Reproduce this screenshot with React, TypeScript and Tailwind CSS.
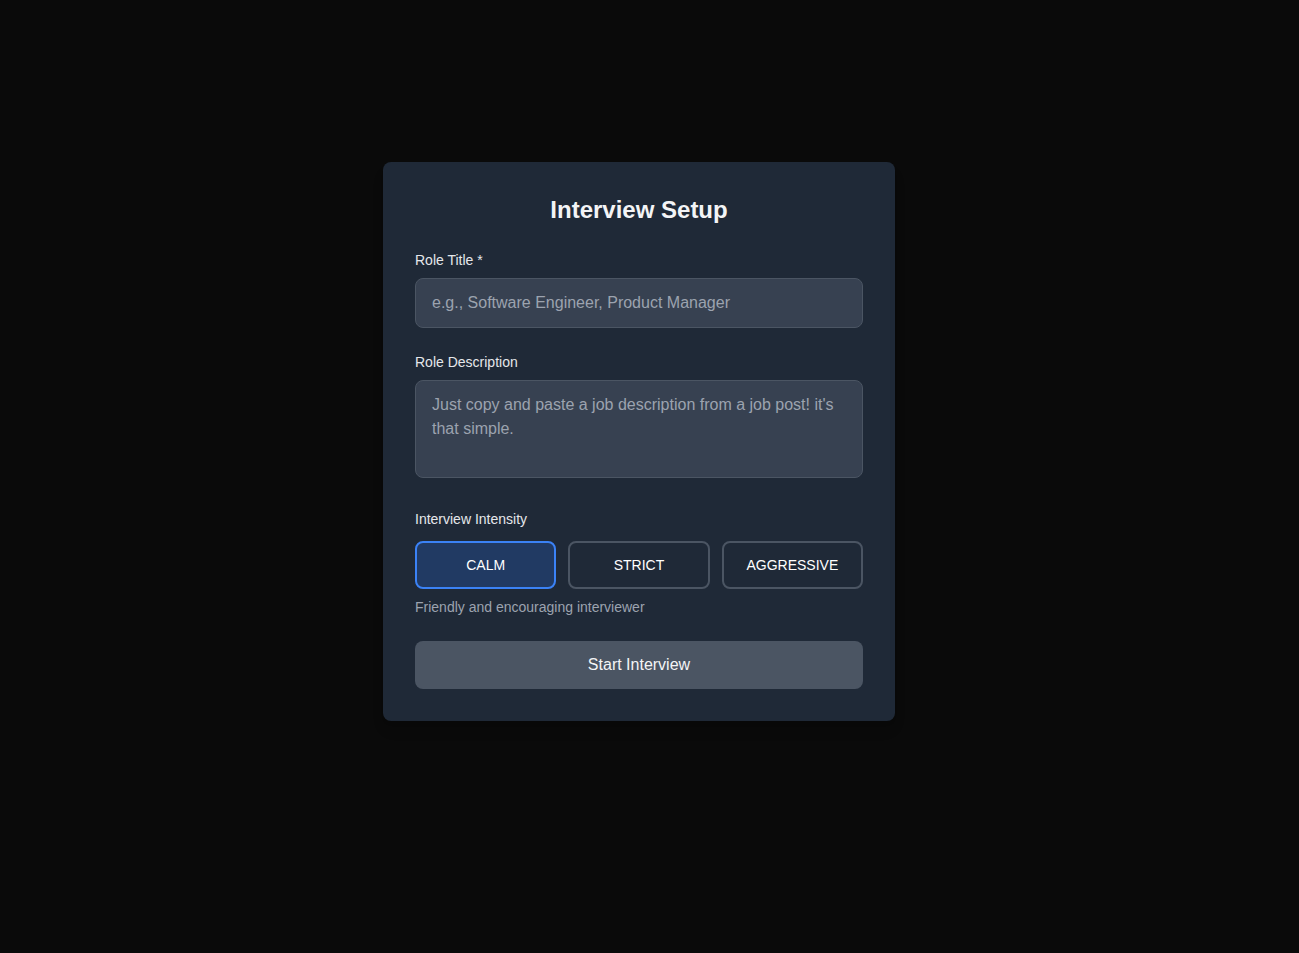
import { useState } from "react";

const intensities = [
  { key: "CALM", desc: "Friendly and encouraging interviewer" },
  { key: "STRICT", desc: "Professional and demanding interviewer" },
  { key: "AGGRESSIVE", desc: "Tough, high-pressure interviewer" },
];

export default function App() {
  const [intensity, setIntensity] = useState("CALM");
  const current = intensities.find((i) => i.key === intensity);

  return (
    <div
      className="min-h-screen bg-[#0a0a0a] flex items-center justify-center pr-[21px] pb-[70px]"
      style={{ fontFamily: '"Liberation Sans", Arial, sans-serif' }}
    >
      <div className="w-[512px] bg-[#1f2937] rounded-lg p-8 shadow-lg">
        <h1 className="text-2xl font-bold text-center text-[#f3f4f6] mb-6">
          Interview Setup
        </h1>

        {/* Role title */}
        <label className="block text-sm text-[#e5e7eb] mb-2">Role Title *</label>
        <input
          type="text"
          placeholder="e.g., Software Engineer, Product Manager"
          className="block w-full px-4 py-3 text-base bg-[#374151] border border-[#4b5563] rounded-lg text-white placeholder:text-[#9ca3af] outline-none"
        />

        {/* Role description */}
        <label className="block text-sm text-[#e5e7eb] mt-6 mb-2">
          Role Description
        </label>
        <textarea
          rows={3}
          placeholder="Just copy and paste a job description from a job post! it's that simple."
          className="block w-full px-4 py-3 text-base leading-6 bg-[#374151] border border-[#4b5563] rounded-lg text-white placeholder:text-[#9ca3af] outline-none resize-none"
        />

        {/* Intensity */}
        <label className="block text-sm text-[#e5e7eb] mt-[31px] mb-3">
          Interview Intensity
        </label>
        <div className="grid grid-cols-3 gap-3">
          {intensities.map((it) => (
            <button
              key={it.key}
              onClick={() => setIntensity(it.key)}
              className={
                it.key === intensity
                  ? "py-3 text-sm rounded-lg border-2 border-[#3b82f6] bg-[#213a63] text-white"
                  : "py-3 text-sm rounded-lg border-2 border-[#4b5563] bg-transparent text-white"
              }
            >
              {it.key}
            </button>
          ))}
        </div>
        <p className="text-sm text-[#9ca3af] mt-2">{current?.desc}</p>

        <button className="w-full mt-6 py-3 text-base rounded-lg bg-[#4b5563] text-[#f3f4f6]">
          Start Interview
        </button>
      </div>
    </div>
  );
}
